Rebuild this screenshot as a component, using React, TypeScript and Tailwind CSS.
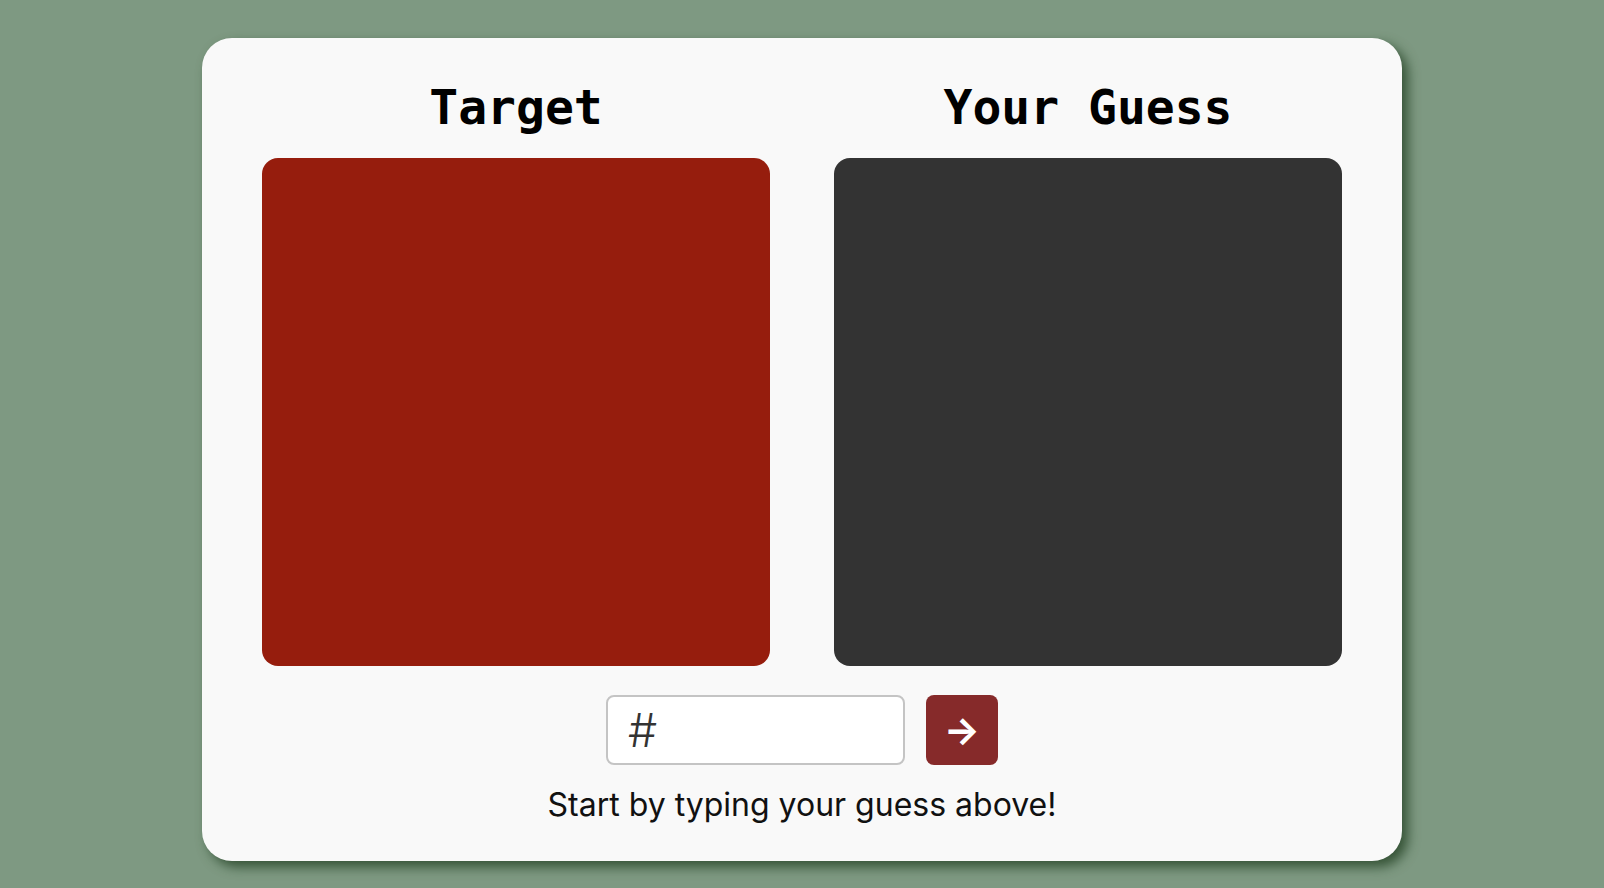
import { useState } from "react";

const mono = { fontFamily: '"DejaVu Sans Mono", "Liberation Mono", monospace' };

export default function App() {
  const [guess, setGuess] = useState("");

  return (
    <main className="flex min-h-[888px] justify-center bg-[#7e9982] pt-[38px] font-['Inter',sans-serif]">
      <div className="flex h-[823px] w-[1200px] flex-col items-center rounded-[30px] bg-[#f9f9f9] px-[60px] pt-[30px] shadow-[6px_6px_12px_rgba(30,60,30,0.75)]">
        <div className="grid w-full grid-cols-2 gap-[64px]">
          <Swatch label="Target" color="bg-[#961d0d]" />
          <Swatch label="Your Guess" color="bg-[#333333]" />
        </div>

        <form className="mt-[29px] flex gap-[21px]" onSubmit={(e) => e.preventDefault()}>
          <label className="flex h-[70px] w-[299px] items-center rounded-[8px] border-2 border-[#c4c4c4] bg-white px-[20px] text-[46px] font-light text-[#333]">
            <span>#</span>
            <input
              value={guess}
              onChange={(e) => setGuess(e.target.value)}
              className="ml-1 w-full bg-transparent outline-none"
              maxLength={6}
            />
          </label>
          <button type="submit" className="flex h-[70px] w-[72px] items-center justify-center rounded-[8px] bg-[#862a2a] text-[38px] font-bold leading-none text-white">
            →
          </button>
        </form>

        <p className="mt-[16px] text-[32px] text-[#111]">Start by typing your guess above!</p>
      </div>
    </main>
  );
}

function Swatch({ label, color }: { label: string; color: string }) {
  return (
    <div className="flex flex-col items-center">
      <h2 style={mono} className="mb-[12px] text-[48px] font-bold leading-[78px] text-black">
        {label}
      </h2>
      <div className={`h-[508px] w-full rounded-[16px] ${color}`} />
    </div>
  );
}
